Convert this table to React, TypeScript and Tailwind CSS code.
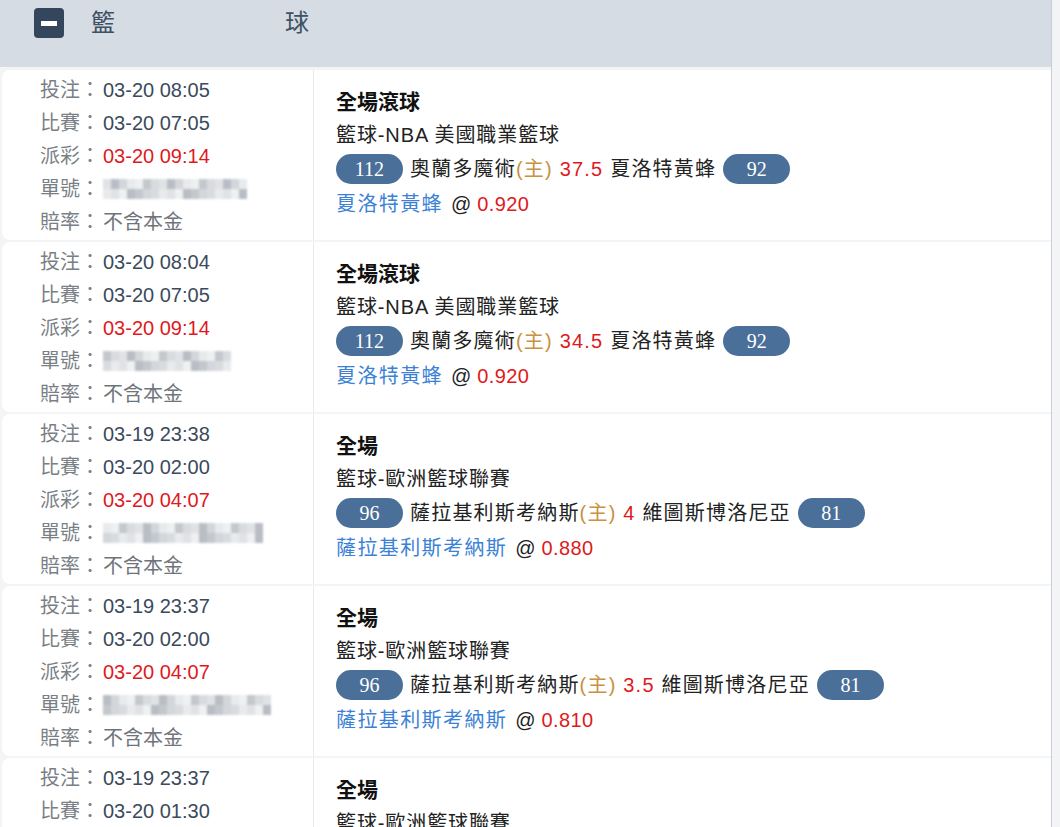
import React from 'react';

type Bet = {
  placed: string;
  match: string;
  settle: string;
  idWidth: number;
  idSeed: number;
  market: string;
  league: string;
  homeScore: string;
  home: string;
  line: string;
  away: string;
  awayScore: string;
  pick: string;
  odds: string;
};

const bets: Bet[] = [
  {
    placed: '03-20 08:05', match: '03-20 07:05', settle: '03-20 09:14', idWidth: 148, idSeed: 1,
    market: '全場滾球', league: '籃球-NBA 美國職業籃球', homeScore: '112', home: '奧蘭多魔術',
    line: '37.5', away: '夏洛特黃蜂', awayScore: '92', pick: '夏洛特黃蜂', odds: '0.920',
  },
  {
    placed: '03-20 08:04', match: '03-20 07:05', settle: '03-20 09:14', idWidth: 134, idSeed: 2,
    market: '全場滾球', league: '籃球-NBA 美國職業籃球', homeScore: '112', home: '奧蘭多魔術',
    line: '34.5', away: '夏洛特黃蜂', awayScore: '92', pick: '夏洛特黃蜂', odds: '0.920',
  },
  {
    placed: '03-19 23:38', match: '03-20 02:00', settle: '03-20 04:07', idWidth: 166, idSeed: 3,
    market: '全場', league: '籃球-歐洲籃球聯賽', homeScore: '96', home: '薩拉基利斯考納斯',
    line: '4', away: '維圖斯博洛尼亞', awayScore: '81', pick: '薩拉基利斯考納斯', odds: '0.880',
  },
  {
    placed: '03-19 23:37', match: '03-20 02:00', settle: '03-20 04:07', idWidth: 168, idSeed: 4,
    market: '全場', league: '籃球-歐洲籃球聯賽', homeScore: '96', home: '薩拉基利斯考納斯',
    line: '3.5', away: '維圖斯博洛尼亞', awayScore: '81', pick: '薩拉基利斯考納斯', odds: '0.810',
  },
  {
    placed: '03-19 23:37', match: '03-20 01:30', settle: '03-20 03:40', idWidth: 160, idSeed: 5,
    market: '全場', league: '籃球-歐洲籃球聯賽', homeScore: '88', home: '薩拉基利斯考納斯',
    line: '3.5', away: '維圖斯博洛尼亞', awayScore: '79', pick: '薩拉基利斯考納斯', odds: '0.850',
  },
];

const shades = ['#d3d6da', '#e0e2e5', '#c4c8cd', '#e8eaec', '#b9bec4', '#d9dcdf', '#eef0f1'];

// mosaic placeholder for the masked ticket number
function Blurred({ width, seed }: { width: number; seed: number }) {
  const cells = Math.floor(width / 8);
  return (
    <span className="inline-flex h-[20px] overflow-hidden blur-[1px] align-middle" style={{ width }}>
      {Array.from({ length: cells }).map((_, i) => (
        <span key={i} className="flex flex-col w-[8px] h-full">
          <span className="h-1/2" style={{ background: shades[(i * 3 + seed) % shades.length] }} />
          <span className="h-1/2" style={{ background: shades[(i * 5 + seed * 2 + 1) % shades.length] }} />
        </span>
      ))}
    </span>
  );
}

function Info({ label, children }: { label: string; children: React.ReactNode }) {
  return (
    <div className="flex items-center h-[33px]">
      <span className="w-[63px] text-[#7a7f86]">{label}：</span>
      {children}
    </div>
  );
}

function Pill({ n }: { n: string }) {
  return (
    <span className="inline-flex items-center justify-center w-[67px] h-[30px] rounded-full bg-[#4a7099] text-white text-[20px] tracking-normal font-['Liberation_Serif',serif]">
      {n}
    </span>
  );
}

function BetRow({ b }: { b: Bet }) {
  return (
    <div className="flex h-[170px] bg-white rounded-l-lg overflow-hidden shrink-0">
      <div className="w-[312px] shrink-0 border-r border-[#e6e8eb] pl-[38px] pt-[3px]">
        <Info label="投注"><span className="text-[#3b4a5c]">{b.placed}</span></Info>
        <Info label="比賽"><span className="text-[#3b4a5c]">{b.match}</span></Info>
        <Info label="派彩"><span className="text-[#e0191d]">{b.settle}</span></Info>
        <Info label="單號"><Blurred width={b.idWidth} seed={b.idSeed} /></Info>
        <Info label="賠率"><span className="text-[#6f747b]">不含本金</span></Info>
      </div>
      <div className="flex-1 pl-[22px] pt-[15px] text-[#222]">
        <div className="h-[33px] flex items-center font-bold text-[21px] text-[#111]">{b.market}</div>
        <div className="h-[33px] flex items-center tracking-[0.9px]">{b.league}</div>
        <div className="h-[35px] flex items-center gap-[7px]">
          <Pill n={b.homeScore} />
          <span className="tracking-[1.2px]">
            {b.home}
            <span className="text-[#c8923e]">(主)</span>
            <span className="text-[#e0191d]"> {b.line} </span>
            {b.away}
          </span>
          <Pill n={b.awayScore} />
        </div>
        <div className="h-[36px] flex items-center">
          <span className="text-[#3b82d6] tracking-[1.4px]">{b.pick}</span>
          <span className="ml-[8px]">@</span>
          <span className="ml-[6px] text-[#e0191d] tracking-[0.4px]">{b.odds}</span>
        </div>
      </div>
    </div>
  );
}

export default function App() {
  return (
    <div className="w-[1060px] h-[827px] overflow-hidden bg-[#f3f4f6] font-['Liberation_Sans','Noto_Sans_CJK_TC',sans-serif] text-[20px]">
      <div className="w-[1052px] h-full border-r border-[#c9ced5] flex flex-col">
        <div className="h-[67px] shrink-0 bg-[#d6dce3] flex items-start pt-[8px] pl-[34px]">
          <span className="w-[30px] h-[30px] rounded-[4px] bg-[#33465c] flex items-center justify-center">
            <span className="w-[16px] h-[5px] bg-white" />
          </span>
          <span className="ml-[27px] w-[218px] flex justify-between text-[24px] leading-[30px] text-[#3e5064]">
            <span>籃</span>
            <span>球</span>
          </span>
        </div>
        <div className="flex flex-col gap-[2px] pt-[3px] pl-[2px]">
          {bets.map((b, i) => (
            <BetRow key={i} b={b} />
          ))}
        </div>
      </div>
    </div>
  );
}
